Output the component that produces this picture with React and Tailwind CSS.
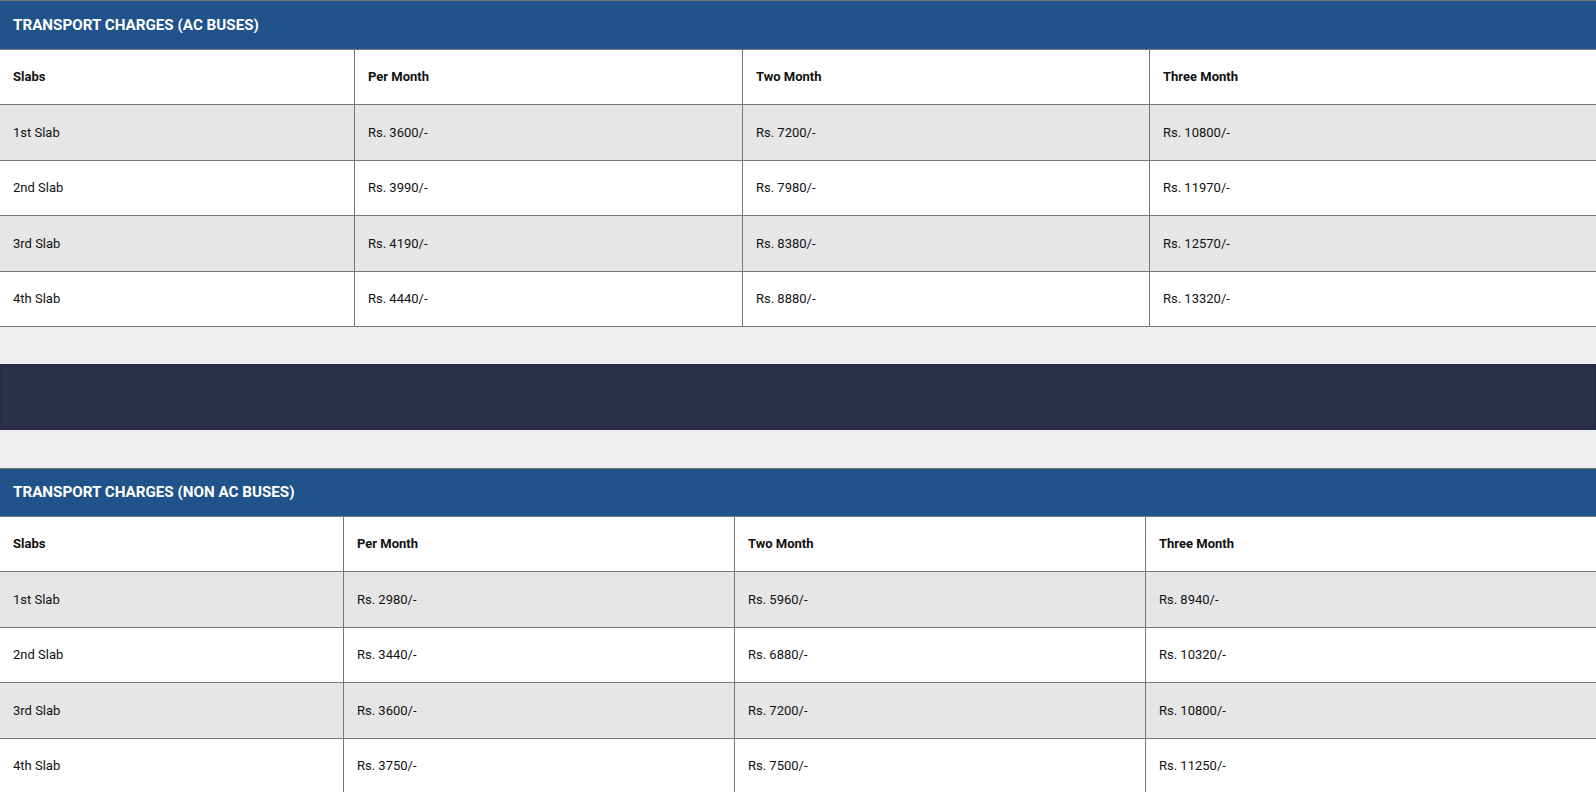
const acRows = [
  ["1st Slab", "Rs. 3600/-", "Rs. 7200/-", "Rs. 10800/-"],
  ["2nd Slab", "Rs. 3990/-", "Rs. 7980/-", "Rs. 11970/-"],
  ["3rd Slab", "Rs. 4190/-", "Rs. 8380/-", "Rs. 12570/-"],
  ["4th Slab", "Rs. 4440/-", "Rs. 8880/-", "Rs. 13320/-"],
];

const nonAcRows = [
  ["1st Slab", "Rs. 2980/-", "Rs. 5960/-", "Rs. 8940/-"],
  ["2nd Slab", "Rs. 3440/-", "Rs. 6880/-", "Rs. 10320/-"],
  ["3rd Slab", "Rs. 3600/-", "Rs. 7200/-", "Rs. 10800/-"],
  ["4th Slab", "Rs. 3750/-", "Rs. 7500/-", "Rs. 11250/-"],
];

const headings = ["Slabs", "Per Month", "Two Month", "Three Month"];

const ChargesTable = ({ title, rows, cols, titleH }) => {
  return (
    <div className="w-full">
      <div className={`${titleH} bg-[#20538a] border-y border-[#777] flex items-center px-[13px]`}>
        <h2 className="text-white font-bold text-[15.2px] uppercase">{title}</h2>
      </div>
      <div className={`grid ${cols} h-[55px] bg-white border-b border-[#777]`}>
        {headings.map((h, i) => (
          <div
            key={h}
            className={`flex items-center px-[13px] font-bold text-[13px] text-[#111] ${
              i > 0 ? "border-l border-[#777]" : ""
            }`}
          >
            {h}
          </div>
        ))}
      </div>
      {rows.map((row, r) => (
        <div
          key={row[0]}
          className={`grid ${cols} border-b border-[#777] ${
            r % 2 === 0 ? "bg-[#e6e6e6] h-[56px]" : "bg-white h-[55px]"
          }`}
        >
          {row.map((cell, i) => (
            <div
              key={i}
              className={`flex items-center px-[13px] text-[13px] text-[#111] ${
                i > 0 ? "border-l border-[#777]" : ""
              }`}
            >
              {cell}
            </div>
          ))}
        </div>
      ))}
    </div>
  );
};

export default function App() {
  return (
    <div className="w-full bg-[#efeff1] font-['Roboto',sans-serif]">
      <ChargesTable
        title="Transport Charges (AC Buses)"
        rows={acRows}
        cols="grid-cols-[354px_388px_407px_1fr]"
        titleH="h-[50px]"
      />
      <div className="h-[37px]" />
      <div className="h-[66px] bg-[#2c3049] shadow-[inset_0_2px_3px_rgba(0,0,0,0.1),inset_0_-2px_3px_rgba(0,0,0,0.1)]" />
      <div className="h-[38px]" />
      <ChargesTable
        title="Transport Charges (Non AC Buses)"
        rows={nonAcRows}
        cols="grid-cols-[343px_391px_411px_1fr]"
        titleH="h-[49px]"
      />
    </div>
  );
}
